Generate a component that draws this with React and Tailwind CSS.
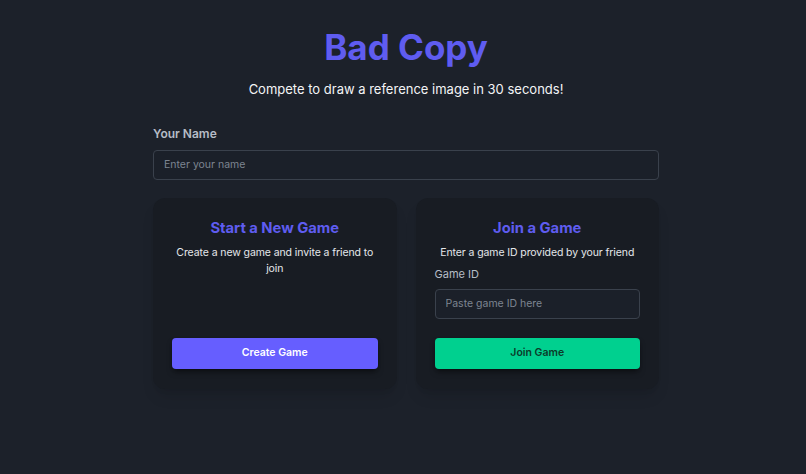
const font = { fontFamily: "Inter, 'Noto Sans', sans-serif" };

const Card = ({ title, text, children }) => (
  <div className="flex flex-col rounded-xl bg-[#181c23] px-[19px] pt-[19px] pb-[20px] shadow-lg">
    <h2 className="text-center text-[14.75px] font-bold leading-[22px] text-[#5f5cf0]">{title}</h2>
    <p className="mt-[6px] text-center text-[10.5px] leading-[16px] tracking-[-0.1px] text-[#e5e7eb]">{text}</p>
    {children}
  </div>
);

const App = () => {
  return (
    <div className="min-h-[474px] w-full bg-[#1c212a] pt-[24px] pl-[6px]" style={font}>
      <div className="mx-auto w-[506px]">
        <h1 className="text-center text-[35px] font-bold leading-[46px] text-[#5f5cf0]">Bad Copy</h1>
        <p className="mt-[10px] text-center text-[13px] text-[#f3f4f6]">
          Compete to draw a reference image in 30 seconds!
        </p>

        <label className="mt-[25px] block text-[12px] font-semibold text-[#b6bcc6]">Your Name</label>
        <input
          className="mt-[7px] h-[30px] w-full rounded border border-[#3a414c] bg-[#1b2029] px-[10px] text-[10.5px] text-gray-200 placeholder:text-[#7d8591] outline-none"
          placeholder="Enter your name"
        />

        <div className="mt-[18px] grid grid-cols-2 gap-[19px]">
          <Card title="Start a New Game" text="Create a new game and invite a friend to join">
            <button className="mt-auto h-[31px] w-full rounded bg-[#665eff] text-[10.5px] font-semibold text-white shadow-md shadow-black/40">
              Create Game
            </button>
          </Card>
          <Card title="Join a Game" text="Enter a game ID provided by your friend">
            <label className="mt-[5px] block text-[11px] leading-[16px] text-[#b6bcc6]">Game ID</label>
            <input
              className="mt-[7px] h-[30px] w-full rounded border border-[#3a414c] bg-[#1b2029] px-[10px] text-[10.5px] text-gray-200 placeholder:text-[#7d8591] outline-none"
              placeholder="Paste game ID here"
            />
            <button className="mt-[19px] h-[31px] w-full rounded bg-[#00d08f] text-[10.5px] font-semibold text-[#0c3b2a] shadow-md shadow-black/40">
              Join Game
            </button>
          </Card>
        </div>
      </div>
    </div>
  );
};

export default App;
